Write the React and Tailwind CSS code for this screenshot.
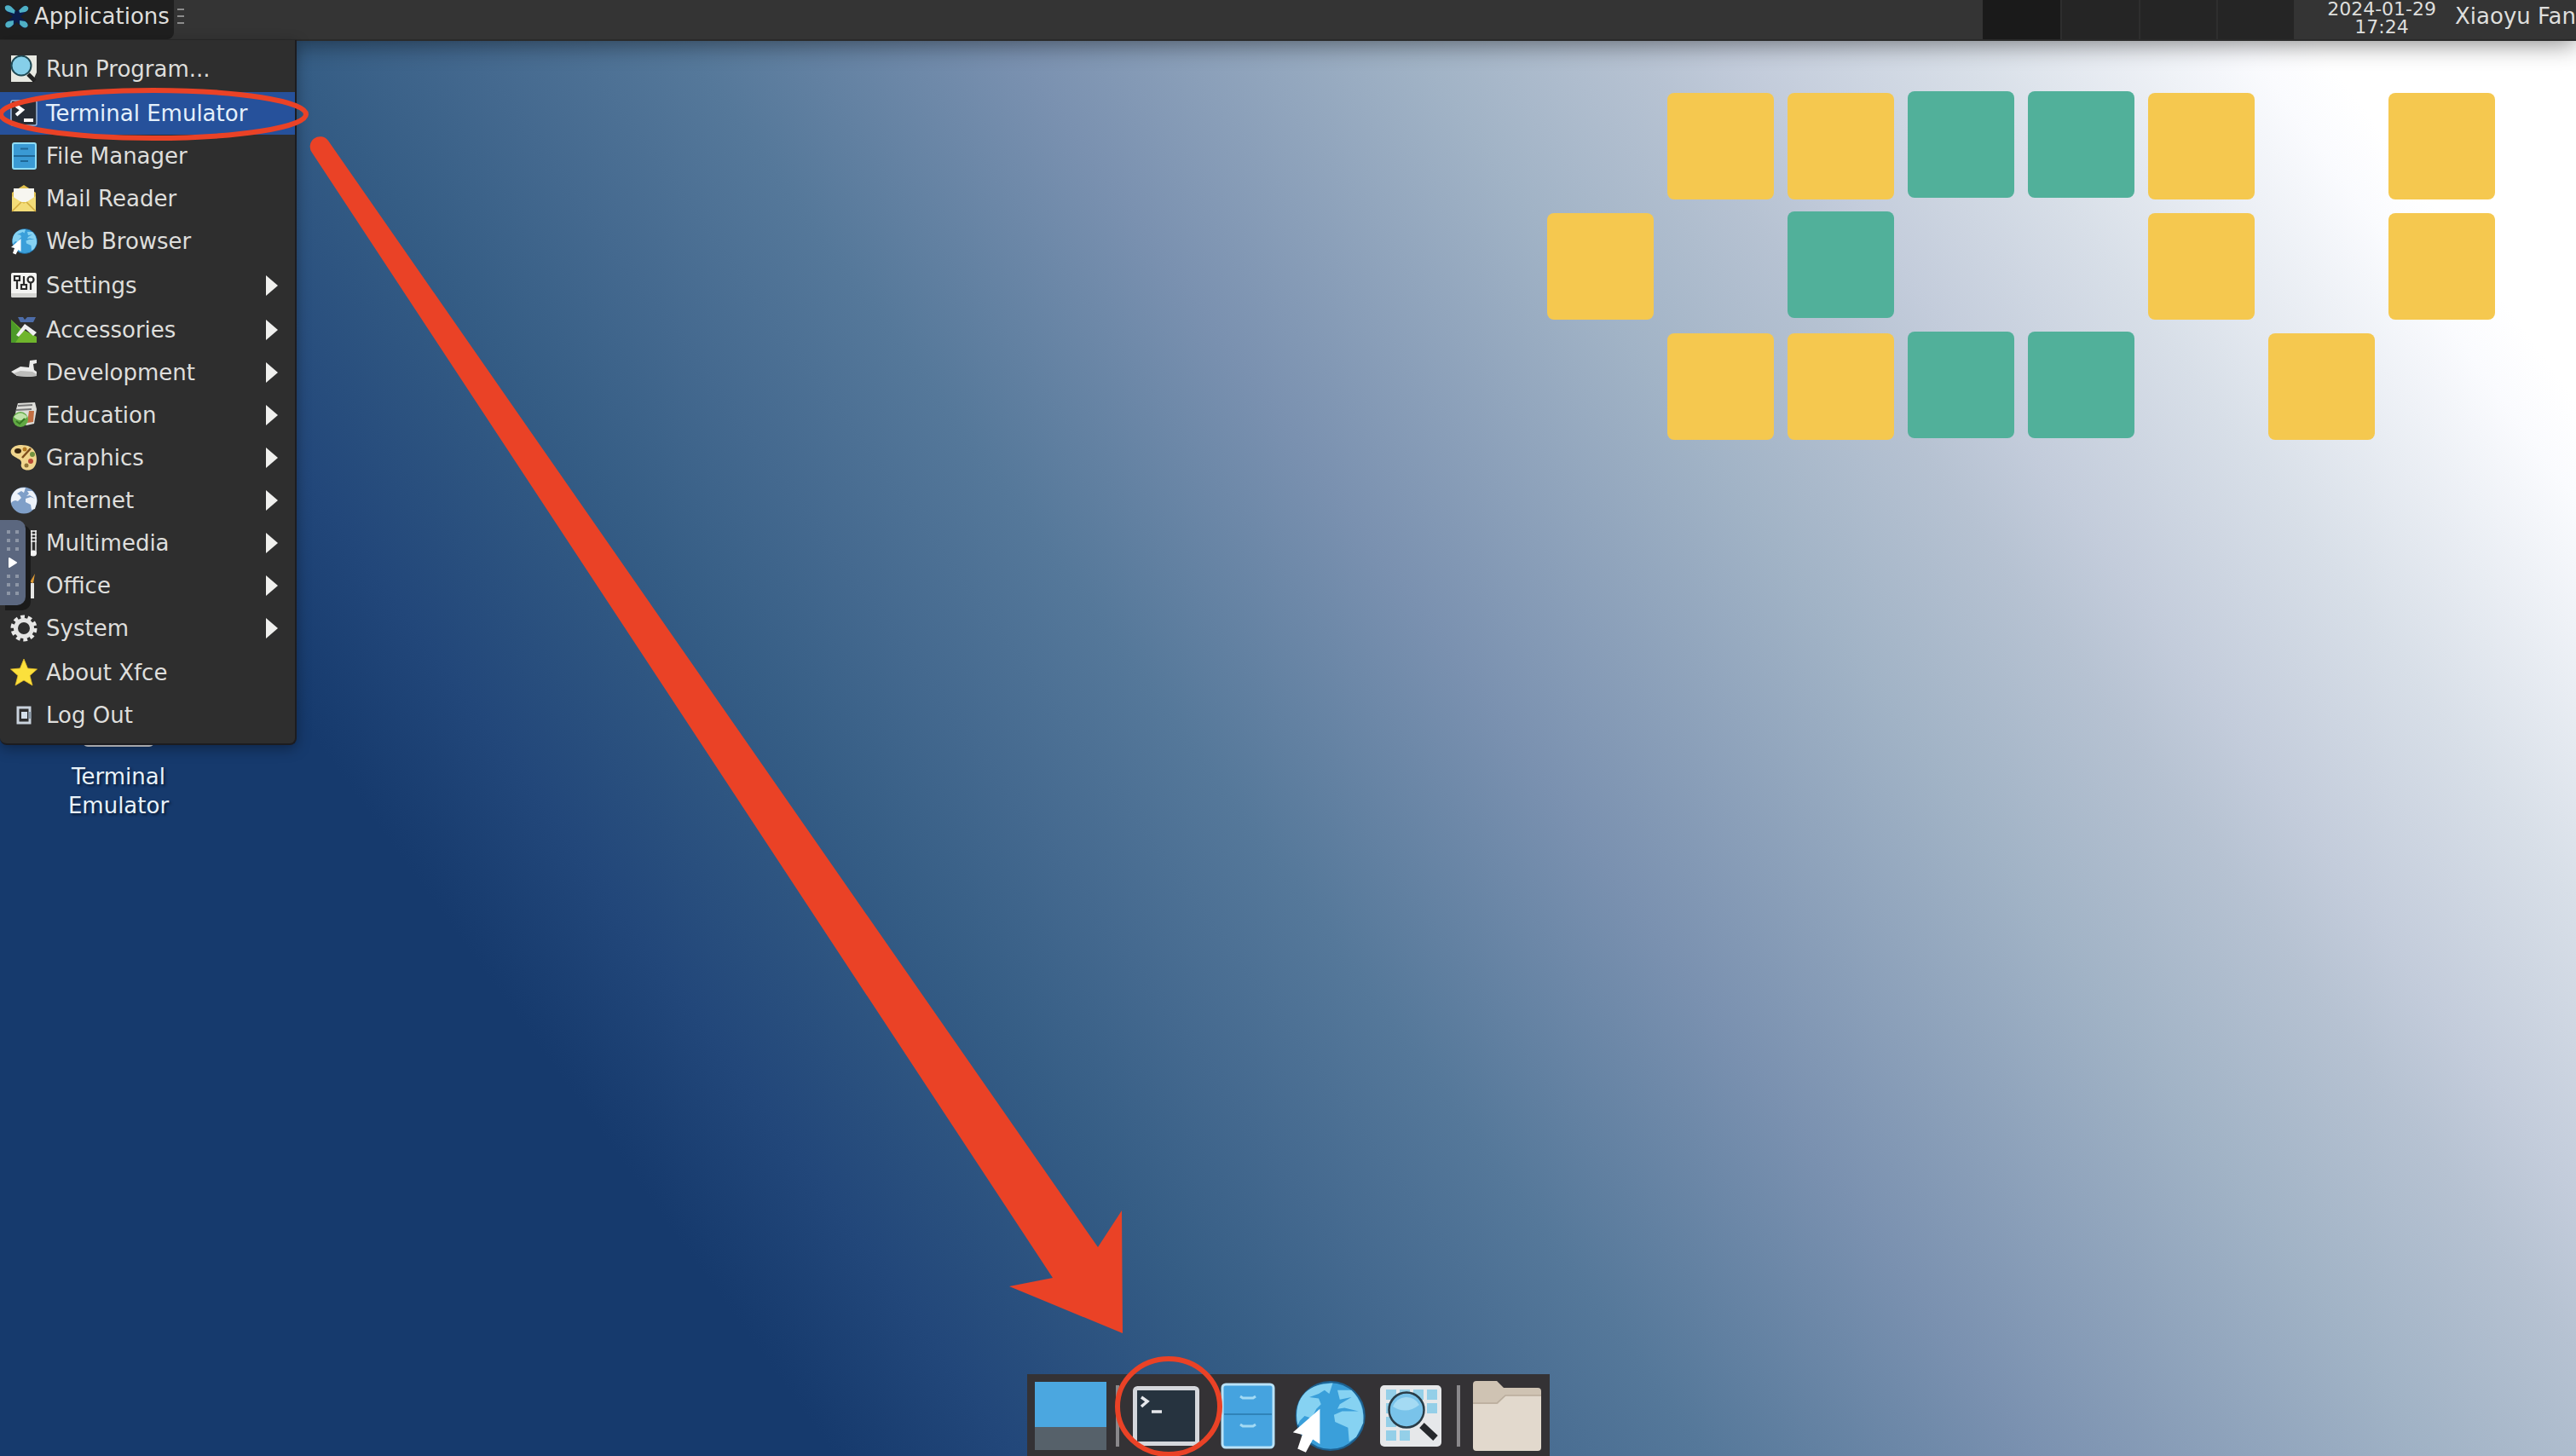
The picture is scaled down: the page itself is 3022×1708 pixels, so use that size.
function Svg({ children, className = "size-8" }) {
  return <svg viewBox="0 0 32 32" className={className + " shrink-0"} aria-hidden="true">{children}</svg>;
}

function Globe({ className, land = "#8fd6f2", sea = "#2f8fc9" }) {
  return (
    <Svg className={className}>
      <circle cx="16" cy="16" r="15.500" fill={sea} />
      <path d="M1 19C0 10 5 3 12 1.500L18 1 16 7 13 5 8 8 11 10 13 13 9 17 6 16 3 17Z" fill={land} />
      <path d="M20 5 26 5C30 9 32 14 31 19L29 26 25 27 24 21 18 18 18 14 24 12 29 14 23 10 19 11 22 8Z" fill={land} />
    </Svg>
  );
}

function BrowserIcon({ className = "size-8" }) {
  return (
    <Svg className={className}>
      <circle cx="17" cy="16" r="14.500" fill="#3a9fda" stroke="#1d608f" strokeWidth=".8" />
      <path d="M3 20C1 10 6 4 13 2.500L18 2 16.500 6.500 14.500 5 12 6.500 8 8 12 8.500 13 11 11 13 9 17 6 16 4 18Z" fill="#86d2f2" />
      <path d="M20 5 26 5C30 9 31.500 14 31 19L28 25 25 27 24.500 21 19 18.500 18.500 15.500 22 14 29 14 23 12.500 20 13 21 11 26 8 21 9Z" fill="#86d2f2" />
      <path d="M12.500 13 12.500 28 9.500 26 6.500 31.500 3 30 5 24 1 23Z" fill="#fff" />
    </Svg>
  );
}

const icons = {
  run: (
    <Svg>
      <path d="M1 0H31V20L26 31H1Z" fill="#e8e9e2" />
      <path d="M21 22 29 30" stroke="#222" strokeWidth="5" />
      <circle cx="13" cy="12" r="11.500" fill="#86cfe9" stroke="#1f4954" strokeWidth="2" />
    </Svg>
  ),
  terminal: (
    <Svg>
      <rect x="1" y="1" width="30" height="29" rx="2" fill="#262c35" stroke="#9fb6d8" strokeWidth="1.500" />
      <path d="M7 7 14 12 7 18" fill="none" stroke="#fff" strokeWidth="4" />
      <path d="M16 24H27" stroke="#fff" strokeWidth="4" />
    </Svg>
  ),
  files: (
    <Svg>
      <rect x="3" y="1" width="27" height="30" rx="2" fill="#3a9ad4" stroke="#8fdcf5" strokeWidth="2" />
      <path d="M4 16H29" stroke="#1f6796" strokeWidth="2" />
      <path d="M12 7.500H21M12 22H21" stroke="#1f6796" strokeWidth="2" />
    </Svg>
  ),
  mail: (
    <Svg>
      <path d="M2 9 16 0 30 9V31H2Z" fill="#e0c04e" />
      <path d="M4 4H28V20H4Z" fill="#f7f6f0" />
      <path d="M2 13 16 22 30 13V31H2Z" fill="#f3dc78" />
      <path d="M2 31 13 20M30 31 19 20" stroke="#d1aa3c" strokeWidth="1.500" />
    </Svg>
  ),
  web: <BrowserIcon />,
  settings: (
    <Svg>
      <rect x="1" y="1" width="30" height="29" rx="2" fill="#f4f4f2" />
      <path d="M1 25H31V29Q31 30 29 30H3Q1 30 1 28Z" fill="#d6d6d3" />
      <g fill="none" stroke="#2a2a2a" strokeWidth="2.200">
        <path d="M5 5H11V10H5ZM8 10V20M16 5V14M13 15H19V20H13ZM24 12V21" />
        <circle cx="24" cy="9" r="3.500" />
      </g>
    </Svg>
  ),
  accessories: (
    <Svg>
      <path d="M1 4 12 14 31 24V31H1Z" fill="#6fb52c" />
      <path d="M1 4 14 19 6 31H1Z" fill="#4c9a28" />
      <path d="M7 22 17 9 31 19 27 23 18 15 10 24Z" fill="#f0f0f2" />
      <path d="M9 1H15L17 4 20 1H30L27 7H12Z" fill="#4d6ca8" />
    </Svg>
  ),
  development: (
    <Svg>
      <path d="M1 15 12 9 22 10 23 2 31 1V5L27 6 28 13 31 15V20L22 21 8 20Z" fill="#ebebea" />
      <path d="M4 17 12 14 26 15 31 18V20L22 21 8 20Z" fill="#bdbdbb" />
    </Svg>
  ),
  education: (
    <Svg>
      <path d="M9 2 29 1 31 9 28 26 19 28 5 20 7 9Z" fill="#dededa" />
      <path d="M22 11H28L27 24 20 25Z" fill="#c36f43" />
      <path d="M9 5 26 4M7 10 25 9" stroke="#777" strokeWidth="2" />
      <circle cx="12" cy="21" r="9" fill="#61a944" />
      <path d="M4 18Q12 9 20 18 12 26 4 18Z" fill="#bfe2a9" />
      <path d="M7 23 11 26 17 20" fill="none" stroke="#357522" strokeWidth="2" />
    </Svg>
  ),
  graphics: (
    <Svg>
      <path d="M1 7C4 0 16 0 23 3 33 8 33 24 26 29 19 33 11 29 13 23 14 18 8 17 4 14 1 12 0 9 1 7Z" fill="#f0d58d" />
      <ellipse cx="9" cy="8" rx="4" ry="3" fill="#39260f" />
      <circle cx="17" cy="6" r="2.500" fill="#b57b24" />
      <circle cx="26" cy="12" r="3" fill="#72923f" />
      <circle cx="24" cy="20" r="3" fill="#b94a35" />
      <circle cx="19" cy="25" r="2.500" fill="#8d7338" />
      <path d="M14 16 24 5" stroke="#7d4d1c" strokeWidth="2.500" />
    </Svg>
  ),
  internet: <Globe className="size-8" land="#edf2f9" sea="#7f9fc8" />,
  multimedia: (
    <Svg>
      <path d="M25 1V26M24 2H31M24 6H31M24 10H31M24 14H31M30 1V29" stroke="#f0f0f0" strokeWidth="1.500" />
      <ellipse cx="27" cy="28" rx="4" ry="3.500" fill="#f2f2f2" />
      <path d="M5 12H22V31H5Z" fill="#6b6b6b" />
    </Svg>
  ),
  office: (
    <Svg>
      <path d="M4 13H28V31H4Z" fill="#e6e6e4" />
      <path d="M17 13H24V31H17Z" fill="#8d8d88" />
      <path d="M23 12 29 2 27 13Z" fill="#df9b36" />
    </Svg>
  ),
  system: (
    <Svg>
      <circle cx="16" cy="16" r="13" fill="none" stroke="#e9e9e8" strokeWidth="5" strokeDasharray="4.600 3.570" />
      <circle cx="16" cy="16" r="9.500" fill="none" stroke="#e4e4e3" strokeWidth="5" />
    </Svg>
  ),
  about: (
    <Svg>
      <path d="M16 0 20.500 11 31.500 12 23 19.500 26 31 16 25 6 31 9 19.500 .5 12 11.500 11Z" fill="#fbe03c" stroke="#e3bb27" strokeWidth=".8" />
    </Svg>
  ),
  logout: (
    <Svg>
      <rect x="9" y="7" width="14" height="18" fill="none" stroke="#c9d2dc" strokeWidth="3" />
      <rect x="13" y="12" width="7" height="8" fill="#d5e0ea" />
      <path d="M23 12V20" stroke="#8796a5" strokeWidth="3" />
    </Svg>
  ),
};

const groups = [
  [["run", "Run Program..."]],
  [["terminal", "Terminal Emulator"], ["files", "File Manager"], ["mail", "Mail Reader"], ["web", "Web Browser"]],
  [["settings", "Settings", true]],
  [
    ["accessories", "Accessories", true],
    ["development", "Development", true],
    ["education", "Education", true],
    ["graphics", "Graphics", true],
    ["internet", "Internet", true],
    ["multimedia", "Multimedia", true],
    ["office", "Office", true],
    ["system", "System", true],
  ],
  [["about", "About Xfce"], ["logout", "Log Out"]],
];

function MenuItem({ icon, label, sub }) {
  return (
    <button
      type="button"
      role="menuitem"
      className={"flex h-[50px] w-full items-center gap-[10px] pl-3 pr-5 text-left " + (icon === "terminal" ? "bg-[#26519b] text-[#e4f0fb]" : "text-[#dededc]")}
    >
      {icons[icon]}
      <span className="flex-1 whitespace-nowrap">{label}</span>
      {sub && (
        <svg viewBox="0 0 14 24" className="h-6 w-[14px]" aria-hidden="true">
          <path d="M0 0 14 12 0 24Z" fill="#f0f0ee" />
        </svg>
      )}
    </button>
  );
}

function TopPanel() {
  return (
    <header className="relative z-10 flex h-12 items-stretch border-b-2 border-[#2a2a2a] bg-[#343434] shadow-[0_4px_28px_rgba(0,0,0,0.45)]">
      <button type="button" className="flex w-[204px] items-center gap-[6px] rounded-br-lg bg-[#1f1f1f] pb-2 pl-[5px] text-[#dededc]">
        <Svg className="size-[29px]">
          <path d="M1 3Q4 0 9 3L16 9 24 3Q28 0 31 4 32 8 28 10L21 16 28 22Q32 25 30 29 26 33 22 29L16 23 10 29Q6 32 2 29 0 25 4 22L11 16 4 10Q0 7 1 3Z" fill="#0b1c4a" />
          <path d="M1 3Q4 0 9 3L14 8 13 12 6 10Q0 8 1 3ZM31 4Q28 0 23 4L19 8 20 11 27 10Q32 8 31 4ZM2 29Q0 24 5 22L12 21 12 26Q6 33 2 29ZM30 29Q32 25 27 22L20 21 20 26Q26 33 30 29Z" fill="#4fb0c4" />
        </Svg>
        Applications
      </button>
      <div className="ml-1 mt-[10px] flex w-2 flex-col gap-[6px]" aria-hidden="true">
        <i className="h-[2px] bg-[#8c8c8c]" />
        <i className="h-[2px] bg-[#8c8c8c]" />
        <i className="h-[2px] bg-[#8c8c8c]" />
      </div>
      <div className="ml-auto grid w-[365px] grid-cols-4 bg-[#252525]">
        <button type="button" aria-label="Workspace 1" className="bg-[#1a1a1a]" />
        <button type="button" aria-label="Workspace 2" className="border-l-2 border-[#2e2e2e]" />
        <button type="button" aria-label="Workspace 3" className="border-l-2 border-[#2e2e2e]" />
        <button type="button" aria-label="Workspace 4" className="border-l-2 border-[#2e2e2e]" />
      </div>
      <time className="ml-[39px] self-start text-center text-[22px] leading-[21px] text-[#dededc]">
        2024-01-29<br />17:24
      </time>
      <button type="button" className="ml-[22px] w-[142px] overflow-hidden whitespace-nowrap pb-2 text-left text-[#dededc]">
        Xiaoyu Fan
      </button>
    </header>
  );
}

const tiles = [".", "Y", "Y", "G", "G", "Y", ".", "Y", "Y", ".", "G", ".", ".", "Y", ".", "Y", ".", "Y", "Y", "G", "G", ".", "Y", "."];
const tileStyle = { ".": "", Y: "bg-[#f5c84f]", G: "bg-[#51b09a] -mt-[2px] mb-[2px]" };

function Wallpaper() {
  return (
    <div className="ml-auto mr-[95px] mt-[61px] grid w-[1112px] grid-cols-8 gap-4" aria-hidden="true">
      {tiles.map((t, i) => (
        <span key={i} className={"h-[125px] rounded-lg " + tileStyle[t]} />
      ))}
    </div>
  );
}

function Dock() {
  return (
    <nav aria-label="Dock" className="flex h-24 w-[613px] items-center bg-[#343235] pl-[9px] pt-[2px]">
      <button type="button" aria-label="Show Desktop" className="h-20 w-[84px]">
        <svg viewBox="0 0 84 80" className="h-full w-full">
          <path d="M0 0H84V54H0Z" fill="#4ba7e0" />
          <path d="M0 53H84V80H0Z" fill="#56616a" />
        </svg>
      </button>
      <i className="ml-[11px] h-[72px] w-1 bg-[#8a888b]" />
      <button type="button" aria-label="Terminal" className="ml-4 h-[70px] w-[78px]">
        <svg viewBox="0 0 78 70" className="h-full w-full">
          <rect x="2.500" y="2.500" width="73" height="65" rx="3" fill="#26333f" stroke="#d5d7dc" strokeWidth="5" />
          <path d="M10 13 17 18 10 24" fill="none" stroke="#e6e8ec" strokeWidth="3.500" />
          <path d="M22 30H34" stroke="#e6e8ec" strokeWidth="3.500" />
        </svg>
      </button>
      <button type="button" aria-label="File Manager" className="ml-[25px] h-[78px] w-16">
        <svg viewBox="0 0 64 78" className="h-full w-full">
          <rect x="2" y="2" width="60" height="74" rx="4" fill="#45a3df" stroke="#b9e2f7" strokeWidth="3" />
          <path d="M4 37H60" stroke="#2f83b8" strokeWidth="2" />
          <path d="M23 16 26 18H38L41 16M23 49 26 51H38L41 49" fill="none" stroke="#a3daf4" strokeWidth="3" />
        </svg>
      </button>
      <button type="button" aria-label="Web Browser" className="ml-[18px] size-[88px]"><BrowserIcon className="size-[88px]" /></button>
      <button type="button" aria-label="Application Finder" className="ml-4 size-[74px]">
        <svg viewBox="0 0 74 74" className="h-full w-full">
          <rect x="1" y="1" width="72" height="72" rx="5" fill="#e6e8ea" />
          <path d="M8 6H20V18H8ZM24 6H36V18H24ZM40 6H52V18H40ZM56 6H68V18H56ZM8 22H20V34H8ZM56 22H68V34H56ZM8 38H20V50H8ZM8 54H20V66H8ZM24 54H36V66H24Z" fill="#94cfe8" />
          <path d="M50 48 66 63" stroke="#25282c" strokeWidth="8" />
          <circle cx="32" cy="30" r="20.500" fill="#79c3ea" stroke="#293c47" strokeWidth="2.500" />
          <path d="M16 26A17 17 0 0 1 47 24Q32 36 16 26Z" fill="#a4daf3" />
        </svg>
      </button>
      <i className="ml-[17px] h-[72px] w-1 bg-[#8a888b]" />
      <button type="button" aria-label="Home Folder" className="ml-[15px] h-[82px] w-20">
        <svg viewBox="0 0 80 82" className="h-full w-full">
          <path d="M4 0H28L36 8H76Q80 8 80 12V40H0V4Q0 0 4 0Z" fill="#cfc3b3" />
          <path d="M0 27H29L39 17H80V78Q80 82 76 82H4Q0 82 0 78Z" fill="#e2d9cd" />
          <path d="M0 26H28L38 17H80" fill="none" stroke="#b9ac9c" strokeWidth="1.500" />
        </svg>
      </button>
    </nav>
  );
}

function Annotations() {
  return (
    <svg viewBox="0 0 3022 1708" preserveAspectRatio="xMinYMin meet" className="pointer-events-none absolute left-0 top-0 z-40 w-full" aria-hidden="true">
      <ellipse cx="180" cy="134" rx="179" ry="28" fill="none" stroke="#ea4226" strokeWidth="6" />
      <path d="M366 179A11 11 0 0 1 385 165L1288 1463 1316 1420 1317 1564 1184 1509 1235 1499Z" fill="#ea4226" />
      <ellipse cx="1371" cy="1650" rx="60" ry="56" fill="none" stroke="#ea4226" strokeWidth="6" />
    </svg>
  );
}

export default function App() {
  return (
    <div className="relative flex min-h-screen flex-col overflow-hidden bg-[linear-gradient(54deg,#163a6d_0%,#163a6d_23%,#22477a_28%,#355d85_36%,#44698f_41%,#55789a_47%,#7a91b0_56%,#a1b3c6_67%,#b6c2d2_73%,#c3ccdb_76%,#d8dfe8_82%,#fafbfe_90%,#ffffff_92%)] font-['DejaVu_Sans',sans-serif] text-[26px] leading-[34px]">
      <TopPanel />
      <Wallpaper />
      <div role="menu" aria-label="Applications" className="absolute left-0 top-[47px] z-20 w-[348px] rounded-b-lg border-b-2 border-r-2 border-[#1c1c20] bg-[#2e2e2e] pb-2 pt-[9px] shadow-[0_4px_16px_rgba(0,0,0,0.35)]">
        {groups.map((g, i) => (
          <div key={i} role="group" className="mb-[2px] last:mb-0">
            {g.map(([icon, label, sub]) => <MenuItem key={icon} icon={icon} label={label} sub={sub} />)}
          </div>
        ))}
      </div>
      <button type="button" className="absolute left-[68px] top-[810px] z-0 flex w-[142px] flex-col items-center text-[#e8f3fa] [text-shadow:2px_2px_3px_#0a1c38]">
        <span className="mb-[18px] h-[66px] w-[84px] rounded-md border-4 border-[#d5d7dc] bg-[#26333f]" />
        Terminal Emulator
      </button>
      <button type="button" aria-label="Open control bar" className="absolute left-0 top-[610px] z-30 flex h-[100px] w-[30px] flex-col items-center justify-between rounded-r-[10px] bg-[#5b677f] py-3 shadow-[6px_6px_0_#1a1a1a]">
        <svg viewBox="0 0 14 76" className="h-[76px] w-[14px]">
          <path d="M0 0h4v4H0zM10 0h4v4h-4zM0 10h4v4H0zM10 10h4v4h-4zM0 20h4v4H0zM10 20h4v4h-4zM0 52h4v4H0zM10 52h4v4h-4zM0 62h4v4H0zM10 62h4v4h-4zM0 72h4v4H0zM10 72h4v4h-4z" fill="#8d96a6" />
          <path d="M3 33 11 38 3 43Z" fill="#fff" stroke="#fff" strokeWidth="2" strokeLinejoin="round" />
        </svg>
      </button>
      <div className="mt-auto flex justify-center"><Dock /></div>
      <Annotations />
    </div>
  );
}
